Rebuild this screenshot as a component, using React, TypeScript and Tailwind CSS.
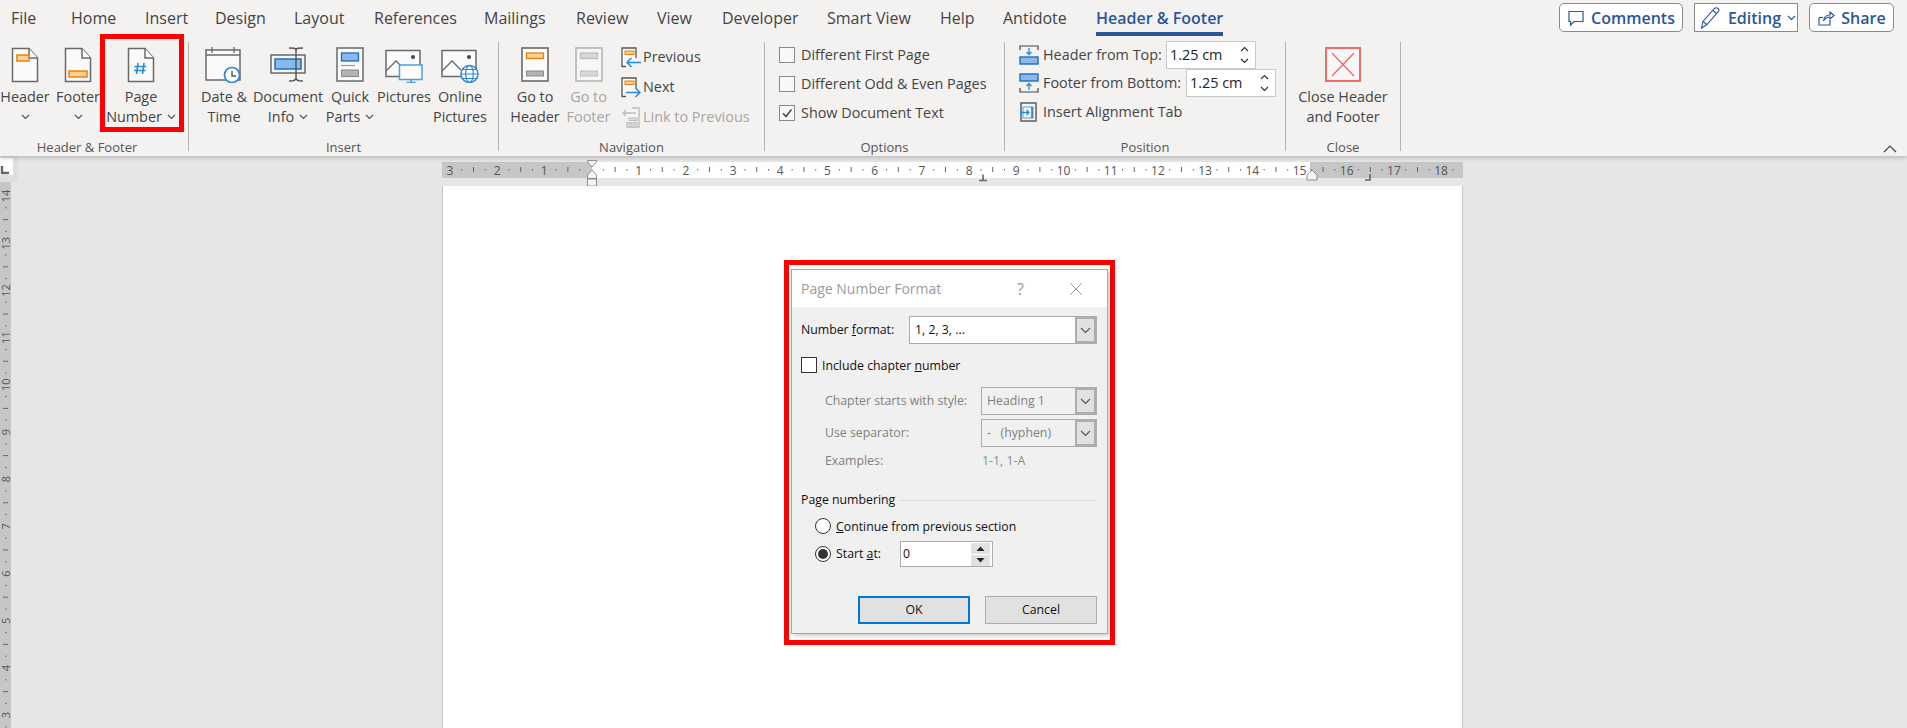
import type { ReactNode } from 'react';

const tabs = [
  { label: 'File', w: 'w-[60px]' },
  { label: 'Home', w: 'w-[74px]' },
  { label: 'Insert', w: 'w-[70px]' },
  { label: 'Design', w: 'w-[79px]' },
  { label: 'Layout', w: 'w-[80px]' },
  { label: 'References', w: 'w-[110px]' },
  { label: 'Mailings', w: 'w-[92px]' },
  { label: 'Review', w: 'w-[81px]' },
  { label: 'View', w: 'w-[65px]' },
  { label: 'Developer', w: 'w-[105px]' },
  { label: 'Smart View', w: 'w-[113px]' },
  { label: 'Help', w: 'w-[63px]' },
  { label: 'Antidote', w: 'w-[93px]' },
];

const STROKE = '#6a6a6a';
const BLUE = '#2b88d8';

function Chevron({ color = '#555' }: { color?: string }) {
  return (
    <svg width="9" height="6" viewBox="0 0 9 6" className="inline-block">
      <path d="M1 1l3.5 3.5L8 1" fill="none" stroke={color} strokeWidth="1.2" />
    </svg>
  );
}

function DocIcon({ children }: { children?: ReactNode }) {
  return (
    <svg width="28" height="36" viewBox="0 0 28 36">
      <path d="M1.5 1.5H18L26.5 11V34.5H1.5Z" fill="#fafafa" stroke={STROKE} strokeWidth="1.5" />
      <path d="M18 1.5V11H26.5" fill="#fff" stroke={STROKE} strokeWidth="1.5" />
      {children}
    </svg>
  );
}

function DateIcon() {
  return (
    <svg width="38" height="36" viewBox="0 0 38 36">
      <rect x="1" y="3" width="34" height="30" fill="#fafafa" stroke={STROKE} strokeWidth="1.5" />
      <path d="M1 8H35M7 0V6M29 0V6" stroke={STROKE} strokeWidth="1.3" />
      <circle cx="27" cy="28" r="7.5" fill="#fff" stroke={BLUE} strokeWidth="1.7" />
      <path d="M27 24V29H31" fill="none" stroke="#555" strokeWidth="1.4" />
    </svg>
  );
}

function DocInfoIcon() {
  return (
    <svg width="38" height="36" viewBox="0 0 38 36">
      <rect x="2" y="8" width="34" height="18" fill="#f7f7f7" stroke={STROKE} strokeWidth="1.5" />
      <rect x="6" y="12" width="26" height="10" fill="#8ab8e8" stroke="#1a6fc0" strokeWidth="1.5" />
      <path d="M27 3V31M20 1C24 1 27 1 27 3C27 1 30 1 34 1M20 34C24 34 27 34 27 31C27 34 30 34 34 34" fill="none" stroke="#555" strokeWidth="1.4" />
    </svg>
  );
}

function QuickPartsIcon() {
  return (
    <svg width="28" height="36" viewBox="0 0 28 36">
      <rect x="1" y="1" width="26" height="33" fill="#fafafa" stroke={STROKE} strokeWidth="1.5" />
      <rect x="5.5" y="6" width="17" height="8" fill="#8ab8e8" stroke="#1a6fc0" strokeWidth="1.3" />
      <path d="M5 18.5H19" stroke="#999" strokeWidth="1.2" />
      <rect x="5.5" y="23" width="17" height="6.5" fill="#b4b4b4" stroke="#888" strokeWidth="1" />
    </svg>
  );
}

function PictureFrame() {
  return (
    <>
      <rect x="1" y="3.5" width="34" height="26" fill="#fafafa" stroke={STROKE} strokeWidth="1.5" />
      <path d="M1 24L11 14L20 23" fill="none" stroke={STROKE} strokeWidth="1.4" />
      <circle cx="28" cy="10" r="2" fill="#444" />
    </>
  );
}

function PicturesIcon() {
  return (
    <svg width="38" height="36" viewBox="0 0 38 36">
      <PictureFrame />
      <rect x="14.5" y="18" width="22.5" height="14.5" fill="#fff" stroke="#4aa0e0" strokeWidth="1.5" />
      <path d="M26 33V36M21.5 35.5H30.5" stroke="#4aa0e0" strokeWidth="1.5" />
    </svg>
  );
}

function OnlinePicturesIcon() {
  return (
    <svg width="38" height="36" viewBox="0 0 38 36">
      <PictureFrame />
      <circle cx="28.5" cy="27" r="8.5" fill="#fff" stroke={BLUE} strokeWidth="1.5" />
      <ellipse cx="28.5" cy="27" rx="3.8" ry="8.5" fill="none" stroke={BLUE} strokeWidth="1.2" />
      <path d="M20 27H37M21.5 22.5H35.5M21.5 31.5H35.5" stroke={BLUE} strokeWidth="1.1" />
    </svg>
  );
}

function GoToIcon({ disabled, top }: { disabled?: boolean; top: string }) {
  const edge = disabled ? '#b5b5b5' : STROKE;
  return (
    <svg width="28" height="36" viewBox="0 0 28 36">
      <rect x="1" y="1" width="26" height="33" fill={disabled ? '#f6f6f6' : '#fafafa'} stroke={edge} strokeWidth="1.6" />
      <rect x="5.5" y="6" width="17" height="5.5" fill={disabled ? '#d8d8d8' : '#fbd28a'} stroke={top} strokeWidth="1.3" />
      <rect x="5.5" y="24" width="17" height="5" fill={disabled ? '#d8d8d8' : '#b4b4b4'} stroke={disabled ? '#bdbdbd' : '#888'} strokeWidth="1" />
    </svg>
  );
}

function PrevIcon() {
  return (
    <svg width="20" height="21" viewBox="0 0 20 21">
      <path d="M5 19.5H1V1H15V11" fill="#fafafa" stroke="#555" strokeWidth="1.3" />
      <rect x="4" y="4" width="9" height="3.5" fill="#fbd28a" stroke="#e8801a" strokeWidth="1" />
      <path d="M20 15.5H6M10.5 11L6 15.5L10.5 20" fill="none" stroke={BLUE} strokeWidth="1.5" />
    </svg>
  );
}

function NextIcon() {
  return (
    <svg width="20" height="21" viewBox="0 0 20 21">
      <path d="M5 19.5H1V1H15V11" fill="#fafafa" stroke="#555" strokeWidth="1.3" />
      <rect x="4" y="4" width="9" height="3.5" fill="#fbd28a" stroke="#e8801a" strokeWidth="1" />
      <path d="M5 15.5H19M14.5 11L19 15.5L14.5 20" fill="none" stroke={BLUE} strokeWidth="1.5" />
    </svg>
  );
}

function LinkIcon() {
  return (
    <svg width="20" height="21" viewBox="0 0 20 21">
      <path d="M11 1H18V20H6V15" fill="#f5f5f5" stroke="#bbb" strokeWidth="1.3" />
      <rect x="8" y="11" width="8" height="2.5" fill="#ddd" stroke="#bbb" />
      <rect x="8" y="15.5" width="8" height="2.5" fill="#ddd" stroke="#bbb" />
      <path d="M15 6H2M5 3L2 6L5 9" fill="none" stroke="#bbb" strokeWidth="1.3" />
    </svg>
  );
}

function HeaderTopIcon() {
  return (
    <svg width="20" height="20" viewBox="0 0 20 20">
      <path d="M1 5V1H19V5" fill="none" stroke="#444" strokeWidth="1.2" />
      <path d="M10 3V9.5M7.5 7L10 9.5L12.5 7" fill="none" stroke={BLUE} strokeWidth="1.3" />
      <rect x="1" y="12" width="18" height="7" fill="#8ab8e8" stroke="#1a6fc0" strokeWidth="1.4" />
    </svg>
  );
}

function FooterBottomIcon() {
  return (
    <svg width="20" height="20" viewBox="0 0 20 20">
      <path d="M1 15V19H19V15" fill="none" stroke="#444" strokeWidth="1.2" />
      <path d="M10 17V10.5M7.5 13L10 10.5L12.5 13" fill="none" stroke={BLUE} strokeWidth="1.3" />
      <rect x="1" y="1" width="18" height="7" fill="#8ab8e8" stroke="#1a6fc0" strokeWidth="1.4" />
    </svg>
  );
}

function AlignTabIcon() {
  return (
    <svg width="20" height="20" viewBox="0 0 20 20">
      <rect x="2" y="1" width="15" height="18" fill="#f6f6f6" stroke="#555" strokeWidth="1.4" />
      <rect x="4" y="5" width="10" height="11" fill="none" stroke="#6aaee8" strokeWidth="1.2" />
      <path d="M1 10.5H10M7.5 8L10 10.5L7.5 13" fill="none" stroke={BLUE} strokeWidth="1.3" />
      <path d="M13 5V16" stroke="#1a6fc0" strokeWidth="1.4" />
    </svg>
  );
}

function CloseIcon() {
  return (
    <svg width="36" height="36" viewBox="0 0 36 36">
      <rect x="1" y="1" width="34" height="33" fill="#f7f7f7" stroke="#f06a66" strokeWidth="2" />
      <path d="M7 6L29 29M29 6L7 29" stroke="#f0625f" strokeWidth="1.2" />
    </svg>
  );
}

interface BigButtonProps {
  icon: ReactNode;
  line1: string;
  line2?: string;
  arrow?: boolean;
  disabled?: boolean;
  className: string;
}

function BigButton({ icon, line1, line2, arrow, disabled, className }: BigButtonProps) {
  return (
    <div className={`flex flex-col items-center pt-[5px] ${className} ${disabled ? 'text-[#a6a6a6]' : 'text-[#444]'}`}>
      <div className="flex h-[36px] items-end justify-center">{icon}</div>
      <div className="mt-[4px] whitespace-nowrap leading-[20px]">{line1}</div>
      <div className="flex h-[20px] items-center gap-[5px] whitespace-nowrap leading-[20px]">
        {line2 && <span>{line2}</span>}
        {arrow && <Chevron />}
      </div>
    </div>
  );
}

function Group({ label, className, labelClass = '', children }: { label: string; className: string; labelClass?: string; children: ReactNode }) {
  return (
    <div className={`h-[109px] shrink-0 border-r border-[#b4b2b0] ${className}`}>
      <div className="flex h-[98px]">{children}</div>
      <div className={`text-center text-[13px] leading-[14px] text-[#555] ${labelClass}`}>{label}</div>
    </div>
  );
}

function SmallRow({ icon, label, disabled }: { icon: ReactNode; label: string; disabled?: boolean }) {
  return (
    <div className="flex h-[30px] items-center gap-[2px]">
      {icon}
      <span className={disabled ? 'text-[#a6a6a6]' : 'text-[#444]'}>{label}</span>
    </div>
  );
}

function OptionRow({ label, checked }: { label: string; checked?: boolean }) {
  return (
    <div className="flex h-[29px] items-center gap-[6px]">
      <span className="flex h-[16px] w-[16px] items-center justify-center border border-[#8a8a8a] bg-[#f8f8f8]">
        {checked && (
          <svg width="12" height="12" viewBox="0 0 12 12">
            <path d="M2 6.5L5 9.5L10.5 2.5" fill="none" stroke="#333" strokeWidth="1.3" />
          </svg>
        )}
      </span>
      <span className="text-[#444]">{label}</span>
    </div>
  );
}

function RibbonSpin() {
  return (
    <div className="flex h-[28px] w-[90px] shrink-0 items-center justify-between border border-[#c8c8c8] bg-white pl-[3px] pr-[6px] text-[#222]">
      <span>1.25 cm</span>
      <div className="flex flex-col gap-[6px]">
        <span className="rotate-180 leading-[0]"><Chevron color="#333" /></span>
        <span className="leading-[0]"><Chevron color="#333" /></span>
      </div>
    </div>
  );
}

function TopButton({ className, children }: { className: string; children: ReactNode }) {
  return (
    <div className={`flex h-[29px] items-center justify-center gap-[6px] border border-[#8a8a8a] bg-white text-[16px] font-semibold text-[#2b579a] ${className}`}>
      {children}
    </div>
  );
}

function Ruler() {
  const nums = Array.from({ length: 22 }, (_, i) => i - 3);
  const x0 = 149.5;
  const unit = 47.2;
  return (
    <svg width="1021" height="30" viewBox="0 0 1021 30" className="block overflow-visible">
      <rect x="0" y="6" width="1021" height="16" fill="#c6c6c6" />
      <rect x="150" y="6" width="718" height="16" fill="#fff" />
      {nums.map((n) => {
        const x = x0 + n * unit;
        return (
          <g key={n}>
            {n !== 0 && n <= 18 && (
              <text x={x} y="18.5" textAnchor="middle" fontSize="12" fill="#555" fontFamily="Open Sans, sans-serif">
                {Math.abs(n)}
              </text>
            )}
            {n < 18 && (
              <>
                <rect x={x + unit * 0.25 - 0.5} y="13" width="1" height="1.5" fill="#666" />
                <rect x={x + unit * 0.5 - 0.5} y="11" width="1" height="5" fill="#666" />
                <rect x={x + unit * 0.75 - 0.5} y="13" width="1" height="1.5" fill="#666" />
              </>
            )}
            {n === 18 && <rect x={x + unit * 0.25 - 0.5} y="13" width="1" height="1.5" fill="#666" />}
          </g>
        );
      })}
      <path d="M145.5 4.5H154.5V6L150 11L145.5 6ZM145.5 19L150 14L154.5 19V22.5H145.5ZM145.5 23H154.5V30H145.5Z" fill="#f4f4f4" stroke="#777" strokeWidth="0.8" />
      <path d="M541 18.5V24M537 24.5H545" stroke="#666" strokeWidth="1.6" fill="none" />
      <path d="M865 19L870 14L875 19V24H865Z" fill="#f4f4f4" stroke="#777" strokeWidth="0.8" />
      <path d="M928 18V24H923" stroke="#666" strokeWidth="1.6" fill="none" />
    </svg>
  );
}

function SideRuler() {
  const nums = Array.from({ length: 12 }, (_, i) => i + 3);
  const y = (n: number) => 856.8 - 47.2 * n - 182;
  return (
    <svg width="11" height="546" viewBox="0 0 11 546" className="block overflow-visible">
      <rect x="0" y="0" width="11" height="546" fill="#c6c6c6" />
      {nums.map((n) => (
        <g key={n}>
          <text x="5.5" y={y(n)} textAnchor="middle" dominantBaseline="central" fontSize="11" fill="#555" fontFamily="Open Sans, sans-serif" transform={`rotate(-90 5.5 ${y(n)})`}>
            {n}
          </text>
          <rect x="3" y={y(n) + 23.1} width="5" height="1" fill="#666" />
          <rect x="5" y={y(n) + 11.3} width="1.5" height="1" fill="#666" />
          <rect x="5" y={y(n) + 34.9} width="1.5" height="1" fill="#666" />
        </g>
      ))}
    </svg>
  );
}

function Combo({ value, disabled, className }: { value: string; disabled?: boolean; className: string }) {
  return (
    <div className={`flex h-[28px] items-stretch border border-[#adadad] ${disabled ? 'bg-[#f0f0f0] text-[#808080]' : 'bg-white text-[#111]'} ${className}`}>
      <span className="flex flex-1 items-center whitespace-pre pl-[5px]">{value}</span>
      <span className="flex w-[21px] items-center justify-center border-[2px] border-[#adadad] bg-[#e1e1e1]">
        <svg width="11" height="7" viewBox="0 0 11 7">
          <path d="M1 1l4.5 4.5L10 1" fill="none" stroke="#555" strokeWidth="1.1" />
        </svg>
      </span>
    </div>
  );
}

function Radio({ on }: { on?: boolean }) {
  return (
    <span className="flex h-[16px] w-[16px] shrink-0 items-center justify-center rounded-full border border-[#333] bg-white">
      {on && <span className="h-[10px] w-[10px] rounded-full bg-[#333]" />}
    </span>
  );
}

function Dialog() {
  return (
    <div className="absolute left-[784px] top-[260px] border-[5px] border-[#ff0000] px-[2px] pb-[6px] pt-[4px]">
      <div className="flex h-[365px] w-[317px] flex-col border border-[#a8a8a8] bg-[#f0f0f0] text-[12.3px] leading-[20px] text-[#111] shadow-[2px_2px_4px_rgba(0,0,0,0.2)]">
        <div className="flex h-[37px] shrink-0 items-center bg-white pl-[9px] pr-[24px] text-[#9b9b9b]">
          <span className="text-[14px]">Page Number Format</span>
          <span className="ml-auto text-[16px]">?</span>
          <svg width="14" height="14" viewBox="0 0 14 14" className="ml-[45px]">
            <path d="M1 1L13 13M13 1L1 13" stroke="#999" strokeWidth="1" />
          </svg>
        </div>
        <div className="flex flex-col pl-[9px] pr-[10px] pt-[9px]">
          <div className="flex items-center justify-between">
            <span>Number <span className="underline">f</span>ormat:</span>
            <Combo value="1, 2, 3, ..." className="w-[188px]" />
          </div>
          <div className="mt-[13px] flex h-[16px] items-center gap-[5px]">
            <span className="h-[16px] w-[16px] border border-[#333] bg-white" />
            <span className="pt-px">Include chapter <span className="underline">n</span>umber</span>
          </div>
          <div className="mt-[14px] flex items-center justify-between pl-[24px] text-[#808080]">
            <span>Chapter starts with style:</span>
            <Combo value="Heading 1" disabled className="w-[116px]" />
          </div>
          <div className="mt-[4px] flex items-center justify-between pl-[24px] text-[#808080]">
            <span>Use separator:</span>
            <Combo value="-   (hyphen)" disabled className="w-[116px]" />
          </div>
          <div className="mt-[4px] flex pl-[24px] text-[#808080]">
            <span className="w-[157px]">Examples:</span>
            <span className="text-[#7f9098]">1-1, 1-A</span>
          </div>
          <div className="mt-[19px] flex items-center gap-[5px]">
            <span>Page numbering</span>
            <span className="h-px flex-1 bg-[#dadada]" />
          </div>
          <div className="mt-[8px] flex h-[16px] items-center gap-[5px] pl-[14px]">
            <Radio />
            <span className="pt-[2px]"><span className="underline">C</span>ontinue from previous section</span>
          </div>
          <div className="mt-[7px] flex h-[26px] items-center gap-[5px] pl-[14px]">
            <Radio on />
            <span className="w-[59px]">Start <span className="underline">a</span>t:</span>
            <div className="flex h-[26px] w-[93px] items-center justify-between border border-[#adadad] bg-white pl-[2px] pr-[2px]">
              <span>0</span>
              <div className="flex flex-col gap-px">
                <span className="flex h-[11px] w-[19px] items-center justify-center bg-[#e1e1e1]">
                  <svg width="9" height="5" viewBox="0 0 9 5"><path d="M0.5 5L4.5 0.5L8.5 5Z" fill="#222" /></svg>
                </span>
                <span className="flex h-[11px] w-[19px] items-center justify-center bg-[#e1e1e1]">
                  <svg width="9" height="5" viewBox="0 0 9 5"><path d="M0.5 0L4.5 4.5L8.5 0Z" fill="#222" /></svg>
                </span>
              </div>
            </div>
          </div>
          <div className="mt-[29px] flex justify-end gap-[15px]">
            <div className="flex h-[28px] w-[112px] items-center justify-center border-[2px] border-[#0078d7] bg-[#e1e1e1]">OK</div>
            <div className="flex h-[28px] w-[112px] items-center justify-center border border-[#adadad] bg-[#e1e1e1]">Cancel</div>
          </div>
        </div>
      </div>
    </div>
  );
}

export default function App() {
  return (
    <div className="relative h-[728px] w-[1907px] overflow-hidden bg-[#e6e6e6] font-['Open_Sans','Noto_Sans',sans-serif] text-[14.4px]">
      <div className="relative z-10 h-[156px] bg-[#f3f2f1] shadow-[0_2px_4px_rgba(0,0,0,0.18)]">
        <div className="flex h-[42px] pl-[11px]">
          {tabs.map((t) => (
            <div key={t.label} className={`${t.w} pt-[7px] text-[16px] leading-[22px] text-[#444]`}>{t.label}</div>
          ))}
          <div className="h-[36px] border-b-[4px] border-[#2b579a] pt-[7px] text-[16px] font-semibold leading-[22px] text-[#2b579a]">
            Header &amp; Footer
          </div>
          <div className="ml-auto flex gap-[11px] pr-[13px] pt-[3px]">
            <TopButton className="w-[124px] rounded-[5px]">
              <svg width="18" height="18" viewBox="0 0 18 18">
                <path d="M2 2.5H16V12.5H7L3.5 16V12.5H2Z" fill="none" stroke="#2b579a" strokeWidth="1.2" />
              </svg>
              Comments
            </TopButton>
            <TopButton className="w-[104px] pl-[2px]">
              <svg width="24" height="24" viewBox="0 0 21 24">
                <path d="M2 22L3.5 15.5L15 2.5C16 1.5 17.5 1.5 18.5 2.5C19.5 3.5 19.5 5 18.5 6L7.5 18.5ZM3.5 15.5L7.5 18.5M13.5 4.5L17 7.5" fill="none" stroke="#2b579a" strokeWidth="1.1" />
              </svg>
              Editing
              <Chevron color="#2b579a" />
            </TopButton>
            <TopButton className="w-[85px] rounded-[5px]">
              <svg width="18" height="18" viewBox="0 0 18 18">
                <path d="M2 8.5V16H13V11M2 8.5H6M6.5 12C7 8 10 6 13 6V3L17 6.5L13 10V8C10 8 8 9.5 6.5 12Z" fill="none" stroke="#2b579a" strokeWidth="1.2" />
              </svg>
              Share
            </TopButton>
          </div>
        </div>

        <div className="flex">
          <Group label="Header & Footer" className="w-[189px]" labelClass="pr-[14px]">
            <BigButton
              className="w-[50px]"
              icon={
                <DocIcon>
                  <rect x="6" y="8" width="12" height="6" fill="#fbd28a" stroke="#e8801a" strokeWidth="1.5" />
                </DocIcon>
              }
              line1="Header"
              arrow
            />
            <BigButton
              className="w-[56px]"
              icon={
                <DocIcon>
                  <rect x="5" y="24" width="18" height="6" fill="#fbd28a" stroke="#e8801a" strokeWidth="1.5" />
                </DocIcon>
              }
              line1="Footer"
              arrow
            />
            <BigButton
              className="w-[70px]"
              icon={
                <DocIcon>
                  <path d="M11 16L9.5 27M17 16L15.5 27M7.5 19.5H19M7 23.5H18.5" fill="none" stroke={BLUE} strokeWidth="1.6" />
                </DocIcon>
              }
              line1="Page"
              line2="Number"
              arrow
            />
          </Group>
          <Group label="Insert" className="w-[310px]">
            <BigButton className="w-[70px]" icon={<DateIcon />} line1="Date &" line2="Time" />
            <BigButton className="w-[58px]" icon={<DocInfoIcon />} line1="Document" line2="Info" arrow />
            <BigButton className="w-[66px]" icon={<QuickPartsIcon />} line1="Quick" line2="Parts" arrow />
            <BigButton className="w-[42px]" icon={<PicturesIcon />} line1="Pictures" />
            <BigButton className="w-[70px]" icon={<OnlinePicturesIcon />} line1="Online" line2="Pictures" />
          </Group>
          <Group label="Navigation" className="w-[266px]">
            <BigButton className="w-[72px]" icon={<GoToIcon top="#e8801a" />} line1="Go to" line2="Header" />
            <BigButton className="w-[35px]" disabled icon={<GoToIcon disabled top="#bdbdbd" />} line1="Go to" line2="Footer" />
            <div className="ml-[15px]">
              <SmallRow icon={<PrevIcon />} label="Previous" />
              <SmallRow icon={<NextIcon />} label="Next" />
              <SmallRow icon={<LinkIcon />} label="Link to Previous" disabled />
            </div>
          </Group>
          <Group label="Options" className="w-[240px]">
            <div className="-mt-[2px] pl-[14px]">
              <OptionRow label="Different First Page" />
              <OptionRow label="Different Odd & Even Pages" />
              <OptionRow label="Show Document Text" checked />
            </div>
          </Group>
          <Group label="Position" className="w-[281px]">
            <div className="-mt-px pl-[14px] text-[#444]">
              <div className="flex h-[28px] items-center gap-[4px]">
                <HeaderTopIcon />
                <span className="w-[119px] whitespace-nowrap">Header from Top:</span>
                <RibbonSpin />
              </div>
              <div className="flex h-[28px] items-center gap-[4px]">
                <FooterBottomIcon />
                <span className="w-[139px] whitespace-nowrap">Footer from Bottom:</span>
                <RibbonSpin />
              </div>
              <div className="flex h-[30px] items-center gap-[4px]">
                <AlignTabIcon />
                <span>Insert Alignment Tab</span>
              </div>
            </div>
          </Group>
          <Group label="Close" className="w-[115px]">
            <BigButton className="w-[114px]" icon={<CloseIcon />} line1="Close Header" line2="and Footer" />
          </Group>
          <div className="ml-auto mr-[10px] mt-[102px]">
            <svg width="14" height="9" viewBox="0 0 14 9">
              <path d="M1 8L7 2L13 8" fill="none" stroke="#444" strokeWidth="1.2" />
            </svg>
          </div>
        </div>
      </div>

      <div className="flex h-[572px]">
        <div className="w-[442px] shrink-0">
          <div className="h-[26px] w-[18px] bg-[#dedede] pt-[2px]">
            <div className="flex h-[17px] w-[13px] items-end bg-white">
              <svg width="9" height="9" viewBox="0 0 9 9">
                <path d="M2 0V7H9" fill="none" stroke="#666" strokeWidth="2.4" />
              </svg>
            </div>
          </div>
          <SideRuler />
        </div>
        <div className="flex w-[1021px] shrink-0 flex-col">
          <Ruler />
          <div className="flex-1 border-x border-[#c6c6c6] bg-white" />
        </div>
      </div>

      <div className="absolute left-[100px] top-[34px] z-20 h-[98px] w-[84px] border-[5px] border-[#ff0000]" />
      <Dialog />
    </div>
  );
}
